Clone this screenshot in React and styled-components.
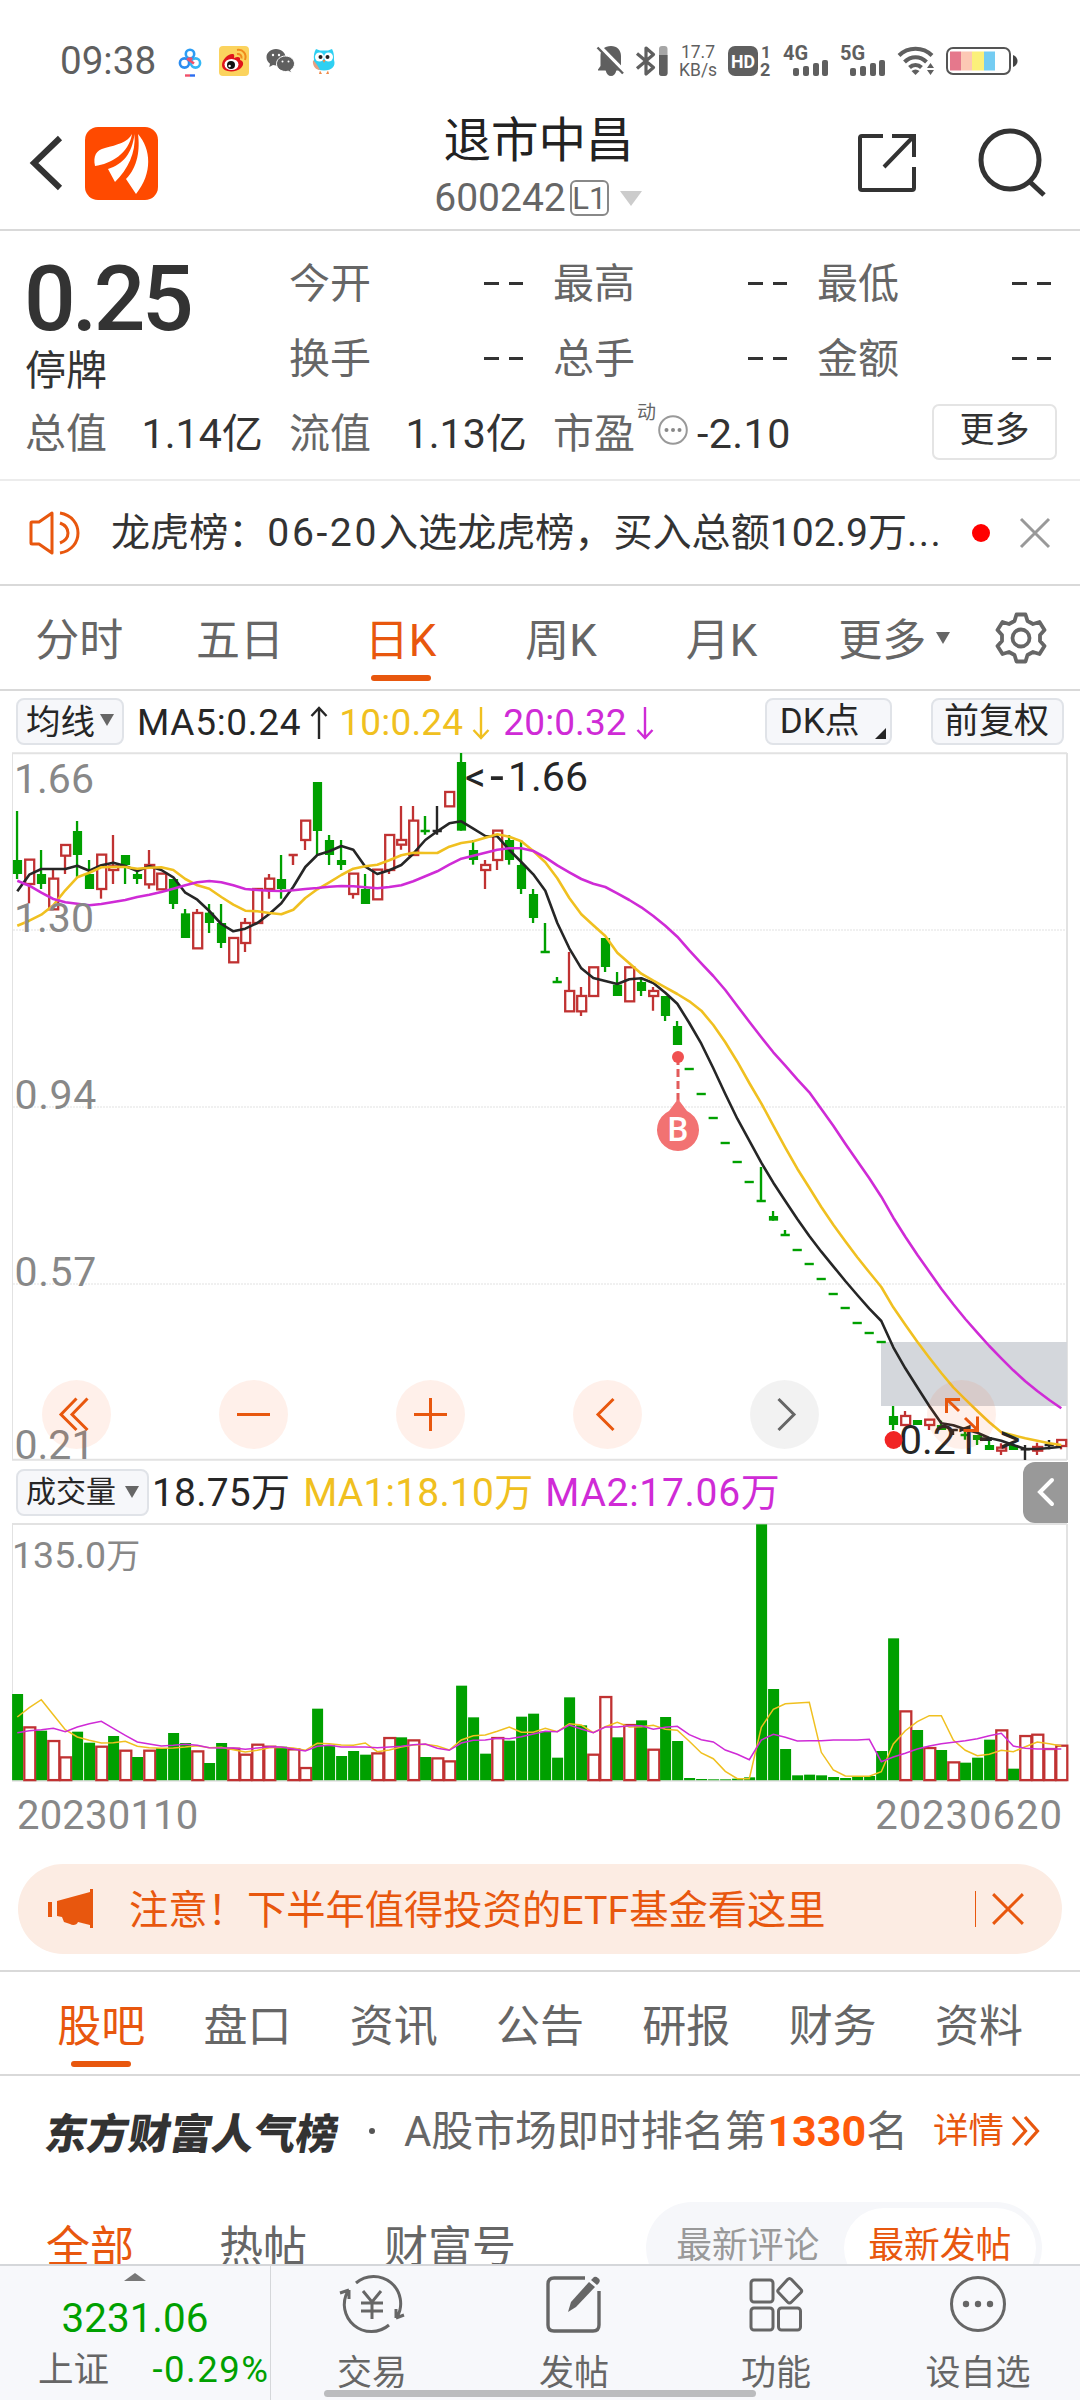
import React from "react";
import styled, { createGlobalStyle, css } from "styled-components";

const ORANGE = "#e8570e";
const GREEN = "#00a000";
const RED = "#c03232";
const YELLOW = "#f0c020";
const MAGENTA = "#cf2bd6";
const INK = "#262626";
const FONT = `Roboto, "Noto Sans CJK SC", sans-serif`;

const Global = createGlobalStyle`
  html, body { margin: 0; padding: 0; background: #fff; }
  * { box-sizing: border-box; }
  svg { display: block; flex: none; overflow: visible; }
`;

const Screen = styled.div`
  width: 1080px;
  height: 2400px;
  display: flex;
  flex-direction: column;
  overflow: hidden;
  background: #fff;
  color: #333;
  font-family: ${FONT};
  font-weight: 400;
  white-space: nowrap;
`;

/* ---------- status bar ---------- */
const StatusBar = styled.div`
  height: 114px;
  padding: 8px 61px 0 60px;
  display: flex;
  align-items: center;
  justify-content: space-between;
  color: #5f5f5f;
`;
const StatusGroup = styled.div`
  display: flex;
  align-items: center;
  gap: ${(p) => p.$gap}px;
`;
const Clock = styled.span`
  font-size: 38.6px;
  line-height: 44px;
  margin-right: 5px;
`;
const NetSpeed = styled.span`
  width: 38px;
  font-size: 17.5px;
  line-height: 18px;
  text-align: center;
  display: flex;
  flex-direction: column;
`;

/* ---------- header ---------- */
const Header = styled.div`
  height: 117px;
  padding: 0 33px 0 28px;
  border-bottom: 2px solid #d9d9d9;
  display: grid;
  grid-template-columns: 300px 1fr 300px;
`;
const HeaderSide = styled.div`
  display: flex;
  align-items: center;
  gap: ${(p) => p.$gap}px;
  justify-content: ${(p) => (p.$end ? "flex-end" : "flex-start")};
  padding-bottom: 17px;
`;
const HeaderMid = styled.div`
  display: flex;
  flex-direction: column;
  align-items: center;
  gap: 9px;
  padding-top: 1px;
`;
const Title = styled.div`
  font-size: 47.5px;
  line-height: 52px;
  padding-left: 2px;
  color: #222;
`;
const CodeRow = styled.div`
  display: flex;
  align-items: center;
  height: 44px;
  font-size: 39px;
  line-height: 44px;
  color: #666;
  padding-left: 1px;
`;
const LevelTag = styled.span`
  width: 39px;
  height: 36px;
  margin: 0 11px 0 4px;
  border: 2px solid #888;
  border-radius: 6px;
  font-size: 31px;
  line-height: 33px;
  text-align: center;
`;
const Triangle = styled.span`
  width: 0;
  height: 0;
  flex: none;
  border-left: ${(p) => p.$w / 2}px solid transparent;
  border-right: ${(p) => p.$w / 2}px solid transparent;
  ${(p) =>
    p.$up
      ? css`border-bottom: ${p.$h}px solid ${p.$color};`
      : css`border-top: ${p.$h}px solid ${p.$color};`}
  margin-right: ${(p) => p.$mr || 0}px;
  margin-bottom: ${(p) => p.$mb || 0}px;
`;

/* ---------- quote ---------- */
const Quote = styled.div`
  height: 250px;
  padding: 15px 0 0 25px;
  border-bottom: 2px solid #ececec;
  display: grid;
  grid-template-columns: repeat(4, 264px);
  grid-template-rows: repeat(3, 75px);
`;
const PriceCell = styled.div`
  grid-row: span 2;
  display: flex;
  flex-direction: column;
  padding-top: 15px;
`;
const Price = styled.div`
  font-size: 91px;
  line-height: 76px;
  font-weight: 500;
  letter-spacing: -3.6px;
  margin-left: -1px;
  color: #333;
`;
const Halt = styled.div`
  margin-top: 10px;
  font-size: 41px;
  line-height: 48px;
  color: #333;
`;
const Cell = styled.div`
  width: 238px;
  display: flex;
  align-items: center;
  justify-content: ${(p) => (p.$pack ? "flex-start" : "space-between")};
  font-size: 41px;
  line-height: 48px;
  color: #666;
`;
const Value = styled.span`
  color: #333;
  font-size: 41.2px;
  letter-spacing: ${(p) => p.$ls || 0}px;
  margin-left: ${(p) => p.$ml || 0}px;
`;
const Dashes = styled.span`
  display: flex;
  gap: 10px;
  margin-right: 4px;
  &::before, &::after {
    content: "";
    width: 14.5px;
    height: 3.5px;
    background: #333;
  }
`;
const PeNote = styled.sup`
  font-size: 19px;
  line-height: 20px;
  align-self: flex-start;
  margin: 7px 1px 0 2px;
`;
const MoreButton = styled.button`
  align-self: center;
  justify-self: end;
  width: 125px;
  height: 56px;
  margin: 0 24px 3px 0;
  padding: 0 0 3px;
  border: 2px solid #e4e4e4;
  border-radius: 7px;
  background: #fff;
  font: 400 35px/44px ${FONT};
  color: #333;
`;

/* ---------- news ---------- */
const News = styled.div`
  height: 105px;
  padding: 0 29px;
  border-bottom: 2px solid #d9d9d9;
  display: flex;
  align-items: center;
`;
const NewsText = styled.div`
  margin-left: 30px;
  width: 862px;
  font-size: 39.1px;
  line-height: 48px;
`;
const Spaced = styled.span`
  letter-spacing: ${(p) => p.$ls}px;
`;
const Dot = styled.span`
  width: 18px;
  height: 18px;
  border-radius: 50%;
  background: #f00;
  margin-right: 29px;
`;

/* ---------- tabs ---------- */
const Tabs = styled.div`
  height: ${(p) => p.$h}px;
  padding-left: ${(p) => p.$pl || 0}px;
  border-top: ${(p) => (p.$ruled ? "2px solid #d9d9d9" : "none")};
  border-bottom: 2px solid #d9d9d9;
  display: flex;
`;
const Tab = styled.div`
  width: ${(p) => p.$w}px;
  display: flex;
  flex-direction: column;
  align-items: center;
  font-size: 44px;
  line-height: 52px;
  padding-top: ${(p) => p.$top}px;
  color: ${(p) => (p.$on ? ORANGE : "#666")};
`;
const TabLabel = styled.span`
  display: flex;
  align-items: center;
  gap: 10px;
  margin-left: ${(p) => p.$ml || 0}px;
`;
const Underline = styled.i`
  width: 60px;
  height: 6px;
  border-radius: 3px;
  margin-top: ${(p) => p.$mt}px;
  background: ${ORANGE};
`;
const GearSlot = styled.div`
  flex: 1;
  display: flex;
  align-items: center;
  justify-content: center;
  padding: 0 1px 0 0;
`;

/* ---------- indicator rows ---------- */
const IndicatorRow = styled.div`
  height: ${(p) => p.$h}px;
  padding: ${(p) => p.$pad};
  display: flex;
  align-items: center;
  font-size: ${(p) => p.$fs}px;
  line-height: 46px;
`;
const Chip = styled.button`
  width: ${(p) => p.$w}px;
  height: 47px;
  padding: 0 ${(p) => p.$px}px;
  display: flex;
  align-items: center;
  justify-content: space-between;
  border: 2px solid #e0e3e8;
  border-radius: 8px;
  background: #f6f7fa;
  color: #262626;
  font: 400 ${(p) => p.$fs}px/42px ${FONT};
  margin-right: ${(p) => p.$mr || 0}px;
`;
const Corner = styled.i`
  width: 0;
  height: 0;
  margin-top: 23px;
  border-left: 11px solid transparent;
  border-bottom: 11px solid #262626;
`;
const MaValue = styled.span`
  display: flex;
  align-items: center;
  gap: 9px;
  padding-top: 2px;
  color: ${(p) => p.$color};
  letter-spacing: ${(p) => p.$ls || 0}px;
  margin-right: ${(p) => p.$mr}px;
`;
const Spacer = styled.div`
  flex: 1;
`;
const SideHandle = styled.div`
  width: 45px;
  height: 61px;
  border-radius: 12px 0 0 12px;
  background: #999;
  display: flex;
  align-items: center;
  justify-content: center;
`;

/* ---------- charts ---------- */
const ChartBox = styled.div`
  position: relative;
  height: ${(p) => p.$h}px;
`;
const ChartButtons = styled.div`
  position: absolute;
  left: 42px;
  bottom: 12px;
  display: flex;
  gap: 108px;
`;
const RoundButton = styled.div`
  width: 69px;
  height: 69px;
  border-radius: 50%;
  background: ${(p) => (p.$mute ? "rgba(0,0,0,.05)" : "rgba(255,90,20,.09)")};
`;
const DateRow = styled.div`
  height: 68px;
  padding: 0 17px 1px 17px;
  display: flex;
  align-items: center;
  justify-content: space-between;
  font-size: 40px;
  color: #888;
`;

/* ---------- banner ---------- */
const Banner = styled.div`
  height: 90px;
  margin: 14px 18px 16px;
  padding: 0 37px 0 30px;
  border-radius: 45px;
  background: #fcece3;
  display: flex;
  align-items: center;
  color: ${ORANGE};
`;
const BannerText = styled.div`
  flex: 1;
  margin: 3px 0 0 35px;
  font-size: 39.3px;
  line-height: 48px;
`;
const BannerRule = styled.i`
  width: 1.5px;
  height: 36px;
  margin-right: 15px;
  background: ${ORANGE};
`;

/* ---------- feed ---------- */
const Feed = styled.div`
  flex: 1;
  overflow: hidden;
`;
const RankRow = styled.div`
  height: 110px;
  padding: 0 40px 0 46px;
  display: flex;
  align-items: center;
  font-size: 41.9px;
  line-height: 50px;
  color: #666;
`;
const RankTitle = styled.div`
  width: 296px;
  font-family: "Noto Sans CJK SC", sans-serif;
  font-weight: 900;
  font-size: 41.8px;
  color: #333;
  transform: skewX(-9deg);
`;
const RankDot = styled.i`
  width: 6px;
  height: 6px;
  margin: 0 29px 0 27px;
  border-radius: 50%;
  background: #555;
`;
const RankNo = styled.b`
  color: #ff5a0a;
  font-weight: 700;
  font-size: 43px;
  margin-left: 1px;
`;
const Detail = styled.span`
  display: flex;
  align-items: center;
  gap: 7px;
  margin-left: auto;
  font-size: 35.5px;
  color: ${ORANGE};
`;
const FilterRow = styled.div`
  display: flex;
  align-items: flex-start;
  padding: 16px 38px 0 46px;
`;
const Filter = styled.div`
  font-size: 44px;
  line-height: 52px;
  margin: 20px ${(p) => p.$mr}px 0 0;
  color: ${(p) => (p.$on ? ORANGE : "#666")};
`;
const Toggle = styled.div`
  width: 396px;
  height: 92px;
  margin-left: auto;
  padding: 6px;
  border-radius: 46px;
  background: #f6f7fa;
  display: flex;
`;
const ToggleItem = styled.div`
  width: ${(p) => p.$w}px;
  height: 80px;
  border-radius: 40px;
  text-align: center;
  font-size: 35.8px;
  line-height: 77px;
  background: ${(p) => (p.$on ? "#fff" : "transparent")};
  color: ${(p) => (p.$on ? ORANGE : "#999")};
`;

/* ---------- bottom bar ---------- */
const BottomBar = styled.div`
  position: relative;
  height: 136px;
  border-top: 2px solid #d5d7da;
  background: #f7f8fb;
  display: flex;
`;
const IndexCell = styled.div`
  width: 271px;
  border-right: 1px solid #d5d7da;
  padding-top: 7px;
  display: flex;
  flex-direction: column;
  align-items: center;
`;
const IndexValue = styled.div`
  margin-top: 15px;
  font-size: 40.4px;
  line-height: 46px;
  color: ${GREEN};
`;
const IndexLine = styled.div`
  align-self: stretch;
  display: flex;
  justify-content: space-between;
  margin-top: 7px;
  padding: 0 2px 0 38px;
  font-size: 35.5px;
  line-height: 42px;
  color: #666;
`;
const Change = styled.span`
  font-size: 36.5px;
  letter-spacing: 1.5px;
  margin-right: -1.5px;
  color: ${GREEN};
`;
const NavItem = styled.div`
  width: 202px;
  padding-top: 9px;
  display: flex;
  flex-direction: column;
  align-items: center;
  gap: 19px;
  font-size: 35px;
  line-height: 44px;
  color: #666;
`;
const HomeIndicator = styled.div`
  position: absolute;
  left: 324px;
  bottom: 3px;
  width: 432px;
  height: 7px;
  border-radius: 4px;
  background: #bbbcbe;
`;

/* ---------- chart data: [kind, high, bodyTop, bodyBottom, low], thirds of a pixel ---------- */
const CANDLES = [
  ["g", 213, 360, 402, 417], ["r", 358, 358, 432, 490], ["g", 330, 402, 432, 447], ["r", 388, 415, 508, 508],
  ["r", 314, 314, 347, 402], ["g", 243, 273, 345, 413], ["g", 360, 402, 447, 447], ["r", 343, 343, 447, 476],
  ["r", 285, 378, 390, 432], ["g", 345, 345, 375, 432], ["g", 390, 402, 417, 432], ["r", 330, 374, 433, 446],
  ["r", 400, 400, 448, 448], ["g", 417, 417, 492, 507], ["g", 507, 520, 594, 594], ["r", 507, 518, 625, 625],
  ["g", 492, 518, 549, 579], ["g", 492, 549, 609, 624], ["r", 593, 593, 667, 667], ["r", 534, 548, 609, 636],
  ["r", 446, 446, 549, 549], ["r", 402, 415, 447, 476], ["g", 345, 417, 447, 476], ["rc", 345, 345, 345, 375],
  ["r", 241, 241, 300, 330], ["g", 126, 126, 273, 345], ["g", 285, 300, 345, 375], ["g", 300, 360, 375, 390],
  ["r", 400, 400, 462, 476], ["g", 402, 447, 492, 492], ["r", 388, 388, 478, 478], ["r", 284, 284, 390, 402],
  ["r", 198, 299, 314, 329], ["r", 198, 241, 345, 345], ["gc", 228, 273, 273, 284], ["kc", 198, 273, 273, 284],
  ["r", 155, 155, 199, 199], ["g", 39, 66, 272, 272], ["g", 300, 330, 360, 374], ["r", 360, 374, 390, 447],
  ["r", 271, 271, 360, 390], ["g", 285, 300, 360, 374], ["g", 300, 375, 447, 462], ["g", 447, 462, 534, 549],
  ["gc", 549, 636, 636, 636], ["gc", 711, 726, 726, 726], ["r", 636, 752, 814, 814], ["r", 741, 767, 814, 828],
  ["r", 681, 681, 768, 768], ["g", 594, 594, 681, 696], ["g", 696, 734, 768, 768], ["r", 681, 681, 784, 784],
  ["g", 711, 726, 753, 768], ["r", 741, 752, 768, 812], ["g", 768, 768, 828, 843], ["g", 843, 858, 915, 915],
  ["gc", 987, 987, 987, 987], ["gc", 1062, 1062, 1062, 1062], ["gc", 1134, 1134, 1134, 1134], ["gc", 1209, 1209, 1209, 1209],
  ["gc", 1266, 1266, 1266, 1266], ["gc", 1326, 1326, 1326, 1326], ["gc", 1281, 1383, 1383, 1383], ["g", 1413, 1428, 1442, 1442],
  ["gc", 1470, 1485, 1485, 1485], ["gc", 1530, 1530, 1530, 1530], ["gc", 1572, 1572, 1572, 1572], ["gc", 1617, 1617, 1617, 1617],
  ["gc", 1662, 1662, 1662, 1662], ["gc", 1704, 1704, 1704, 1704], ["gc", 1749, 1749, 1749, 1749], ["gc", 1779, 1779, 1779, 1779],
  ["gc", 1806, 1806, 1806, 1806], ["g", 1998, 2028, 2055, 2070], ["r", 2013, 2027, 2055, 2055], ["g", 2040, 2040, 2055, 2055],
  ["r", 2038, 2038, 2055, 2070], ["g", 2042, 2055, 2070, 2070], ["kc", 2068, 2070, 2070, 2085], ["gc", 2070, 2085, 2085, 2099],
  ["g", 2085, 2085, 2100, 2115], ["g", 2100, 2115, 2130, 2130], ["r", 2110, 2122, 2132, 2145], ["g", 2115, 2115, 2130, 2130],
  ["kc", 2115, 2128, 2128, 2160], ["r", 2108, 2120, 2132, 2145], ["kc", 2100, 2115, 2115, 2128], ["r", 2099, 2099, 2118, 2128],
];
const MA5 = [454, 404, 387, 387, 387, 377, 392, 376, 368, 378, 393, 379, 390, 412, 458, 479, 513, 552, 574, 566, 549, 522, 490, 440, 381, 345, 334, 318, 329, 380, 402, 391, 375, 341, 300, 274, 250, 244, 266, 288, 289, 330, 366, 403, 452, 549, 625, 685, 714, 723, 732, 718, 715, 729, 758, 791, 849, 911, 985, 1062, 1136, 1202, 1268, 1328, 1383, 1437, 1488, 1535, 1579, 1623, 1665, 1706, 1743, 1822, 1885, 1942, 1998, 2050, 2056, 2068, 2078, 2094, 2102, 2115, 2127, 2127, 2124, 2120];
const MA10 = [557, 542, 524, 496, 451, 412, 398, 382, 381, 381, 386, 383, 382, 390, 417, 436, 446, 471, 494, 512, 514, 519, 523, 509, 474, 448, 427, 405, 386, 379, 374, 361, 346, 338, 339, 339, 320, 309, 304, 293, 283, 290, 304, 333, 367, 415, 474, 523, 556, 588, 638, 670, 701, 722, 742, 762, 784, 812, 855, 907, 965, 1029, 1090, 1157, 1223, 1286, 1343, 1401, 1454, 1504, 1552, 1597, 1641, 1702, 1754, 1805, 1853, 1899, 1942, 1978, 2013, 2047, 2077, 2086, 2095, 2102, 2110, 2115];
const MA20 = [422, 437, 458, 477, 487, 491, 496, 492, 486, 480, 471, 464, 456, 446, 436, 427, 423, 427, 436, 447, 450, 452, 453, 451, 447, 444, 440, 438, 439, 442, 445, 441, 436, 424, 409, 394, 374, 356, 347, 338, 329, 325, 325, 333, 352, 376, 397, 417, 431, 441, 460, 480, 502, 528, 557, 590, 631, 670, 708, 750, 798, 845, 892, 937, 977, 1018, 1057, 1107, 1157, 1211, 1263, 1315, 1370, 1433, 1490, 1544, 1595, 1646, 1693, 1737, 1778, 1818, 1855, 1891, 1924, 1953, 1980, 2005];
const VOLUMES = [702, 800, 812, 841, 890, 815, 848, 858, 828, 870, 891, 870, 864, 819, 849, 872, 909, 849, 864, 882, 852, 858, 860, 866, 922, 746, 856, 888, 873, 884, 878, 832, 832, 839, 891, 893, 902, 677, 772, 881, 832, 842, 770, 761, 815, 893, 712, 796, 882, 709, 832, 793, 781, 867, 771, 843, 954, 957, 958, 958, 956, 952, 193, 687, 867, 946, 944, 946, 951, 954, 950, 948, 873, 535, 752, 810, 862, 870, 905, 908, 893, 839, 809, 926, 826, 822, 865, 855];
const RISING = new Set([1, 3, 4, 7, 9, 11, 15, 18, 19, 20, 21, 23, 24, 30, 31, 33, 35, 36, 40, 48, 49, 51, 53, 74, 76, 78, 82, 84, 85, 86, 87]);
const VMA1 = [771, 743, 719, 764, 809, 831, 841, 849, 848, 844, 859, 863, 865, 864, 861, 857, 863, 862, 869, 876, 871, 863, 862, 864, 871, 850, 851, 855, 856, 849, 875, 870, 861, 855, 853, 858, 870, 840, 827, 825, 814, 801, 817, 817, 805, 815, 791, 795, 818, 800, 787, 801, 800, 796, 808, 811, 844, 879, 896, 934, 956, 956, 802, 748, 731, 729, 727, 877, 930, 948, 949, 949, 935, 852, 812, 785, 767, 767, 840, 871, 887, 883, 871, 875, 860, 846, 851, 858];
const VMA2 = [818, 812, 809, 805, 815, 801, 791, 784, 805, 826, 846, 852, 858, 856, 853, 856, 863, 864, 864, 868, 864, 860, 861, 867, 873, 859, 856, 861, 861, 861, 863, 861, 859, 854, 852, 865, 871, 849, 841, 840, 835, 836, 830, 822, 814, 815, 795, 807, 818, 801, 801, 797, 797, 808, 802, 799, 824, 839, 846, 870, 883, 899, 840, 823, 832, 843, 842, 842, 840, 840, 840, 838, 905, 891, 880, 867, 858, 851, 847, 842, 836, 827, 820, 858, 865, 867, 867, 867];

const cx = (i) => 17.3 + i * 12;
const toPoints = (ys, base) => ys.map((v, i) => `${cx(i).toFixed(1)},${(base + v / 3).toFixed(1)}`).join(" ");

function Candle({ i, d }) {
  const [kind, hi, top, bottom, lo] = d;
  const x = cx(i);
  const y = (v) => 740 + v / 3;
  const color = kind[0] === "g" ? GREEN : kind[0] === "r" ? RED : INK;
  if (kind[1] === "c") {
    return <path d={`M${x - 4.7} ${y(top)}h9.2M${x - 0.3} ${y(hi)}V${y(lo)}`} stroke={color} strokeWidth="2.4" fill="none" />;
  }
  if (kind === "g") {
    return (
      <g fill={color}>
        <rect x={x - 1.4} y={y(hi)} width="2.3" height={y(lo) - y(hi)} />
        <rect x={x - 4.4} y={y(top)} width="9.2" height={y(bottom) - y(top)} />
      </g>
    );
  }
  return (
    <g stroke={color} strokeWidth="2.3" fill="none">
      <path d={`M${x - 0.3} ${y(hi)}V${y(top)}M${x - 0.3} ${y(bottom)}V${y(lo)}`} />
      <rect x={x - 4.1} y={y(top) + 0.3} width="9" height={Math.max(y(bottom) - y(top) - 0.3, 2)} />
    </g>
  );
}

function KLineChart() {
  return (
    <svg width="1080" height="709" viewBox="0 752 1080 709" fontFamily="Roboto, sans-serif" fontSize="41">
      <g stroke="#e2e2e2" fill="none">
        <path d="M12.5 753V1460" />
        <path d="M12 753.2H1067M1067 753V1460M12 1459.8H1067" strokeWidth="2" />
      </g>
      <path d="M13 930H1066M13 1107H1066M13 1284H1066" stroke="#ececec" strokeWidth="1.6" strokeDasharray="2 1" />
      <rect x="881" y="1342" width="186" height="64" fill="#d4d7dc" />
      {CANDLES.map((d, i) => <Candle key={i} i={i} d={d} />)}
      <g fill="none" strokeWidth="2.6" strokeLinejoin="round">
        <polyline points={toPoints(MA5, 740)} stroke={INK} />
        <polyline points={toPoints(MA10, 740)} stroke={YELLOW} />
        <polyline points={toPoints(MA20, 740)} stroke={MAGENTA} />
      </g>
      <g fill="#888">
        <text x="14" y="793">1.66</text>
        <text x="14" y="932">1.30</text>
        <text x="14.5" y="1109" letterSpacing=".6">0.94</text>
        <text x="14.5" y="1286" letterSpacing=".6">0.57</text>
        <text x="14.5" y="1458.5">0.21</text>
      </g>
      <g fill={INK}>
        <text x="465" y="791">&lt;</text>
        <text x="490" y="793" fontSize="50">-</text>
        <text x="508" y="791">1.66</text>
        <text x="899" y="1453.5">0.21</text>
        <text x="979" y="1454" fontSize="50">-</text>
        <text x="999" y="1453">&gt;</text>
      </g>
      <path d="M678 1062V1102" stroke="#e25b5b" strokeWidth="3" strokeDasharray="8 4" strokeDashoffset="-7" />
      <circle cx="678" cy="1057" r="6" fill="#f05050" />
      <path d="M678 1099L687 1111A21 21 0 1 1 669 1111Z" fill="#f27272" />
      <text x="678" y="1140.5" fontSize="33" fontWeight="500" textAnchor="middle" fill="#fff">B</text>
      <circle cx="893.6" cy="1440" r="9" fill="#f12424" />
    </svg>
  );
}

function VolumeChart() {
  return (
    <svg width="1080" height="259" viewBox="0 1523 1080 259" fontFamily={FONT}>
      <g stroke="#e2e2e2" fill="none">
        <path d="M12.5 1524V1781" />
        <path d="M12 1524H1067M1067 1524V1781M12 1780.8H1067" strokeWidth="2" />
      </g>
      {VOLUMES.map((v, i) => {
        const y = 1460 + v / 3;
        return RISING.has(i) ? (
          <rect key={i} x={cx(i) - 5} y={y + 0.7} width="11" height={1779.4 - y} fill="#fff" stroke={RED} strokeWidth="2.3" />
        ) : (
          <rect key={i} x={cx(i) - 5.2} y={y} width="11" height={1780.2 - y} fill={GREEN} />
        );
      })}
      <g fill="none" strokeWidth="1.5">
        <polyline points={toPoints(VMA1, 1460)} stroke={YELLOW} />
        <polyline points={toPoints(VMA2, 1460)} stroke={MAGENTA} />
      </g>
      <text x="12" y="1568" fill="#888" fontSize="37.5">135.0<tspan fontSize="34">万</tspan></text>
    </svg>
  );
}

/* ---------- icons ---------- */
const CloudIcon = () => (
  <svg width="24" height="36" viewBox="0 0 24 36" fill="none" strokeWidth="2.6">
    <circle cx="6.5" cy="20" r="4.6" stroke="#2b8cf0" />
    <circle cx="17.5" cy="20" r="4.6" stroke="#35b8f5" />
    <circle cx="12" cy="11" r="4.2" stroke="#2b9df5" />
    <path d="M9 15.5L16 20.5M10 15Q12 17 14 15" stroke="#f0506a" />
    <path d="M7 32.5H12" stroke="#f0506a" strokeWidth="2.4" />
    <path d="M12 32.5H17" stroke="#2b6cf0" strokeWidth="2.4" />
  </svg>
);
const WeiboIcon = () => (
  <svg width="30" height="30" viewBox="0 0 30 30">
    <rect width="30" height="30" rx="4" fill="#fbd35e" />
    <path d="M3 19C3 13 10 7 14 8C16 8.500 15 11 15 12C19 10 22 11 21 14C25 15 25 19 22 22C17 27 3 27 3 19Z" fill="#e0141c" />
    <ellipse cx="12.5" cy="18.5" rx="7" ry="5.5" fill="#fff" />
    <circle cx="12" cy="19" r="4" fill="#111" />
    <circle cx="10.6" cy="20" r="1.2" fill="#fff" />
    <path d="M18 8C21 7.500 23 9.500 22.500 12.500M18 4C24 3 28 8 26 14" fill="none" stroke="#f08a1c" strokeWidth="2" />
  </svg>
);
const WechatIcon = () => (
  <svg width="29" height="26" viewBox="0 0 29 26">
    <path d="M10 1C4.500 1 .5 4.700 .5 9.200C.5 12 2 14.200 4 15.700L3.300 19L7 17C8 17.300 9 17.400 10 17.400C15.500 17.400 19.500 13.700 19.500 9.200C19.500 4.700 15.500 1 10 1Z" fill="#5f5f5f" />
    <path d="M19.500 8C14.500 8 10.500 11.500 10.500 15.800C10.500 20 14.500 23.500 19.500 23.500C20.500 23.500 21.300 23.400 22.200 23.100L25.400 25L24.700 22C27 20.500 28.500 18.200 28.500 15.800C28.500 11.500 24.500 8 19.500 8Z" fill="#5f5f5f" stroke="#fff" strokeWidth="1" />
    <g fill="#fff"><circle cx="7" cy="7" r="1.2" /><circle cx="13" cy="7" r="1.2" /><circle cx="16.5" cy="13.5" r="1" /><circle cx="22.5" cy="13.5" r="1" /></g>
  </svg>
);
const OwlIcon = () => (
  <svg width="24" height="26" viewBox="0 0 24 26">
    <path d="M4 1L8 2.500H16L20 1C22 4 22 8 22 12C24 18 20 22.500 12 22.500C4 22.500 1 18 2 12C1.500 8 2 4 4 1Z" fill="#2fd0f2" />
    <path d="M1 12C0 18 4 22 8 22C6 18 4 15 1 12Z" fill="#e8a080" />
    <circle cx="7.5" cy="9" r="4.5" fill="#fff" /><circle cx="16.5" cy="9" r="4.5" fill="#fff" />
    <circle cx="8.5" cy="9" r="2" fill="#222" /><circle cx="15.5" cy="9" r="2" fill="#222" />
    <path d="M10.500 12H13.500L12 15ZM8 22.500L7 26H10ZM16 22.500L14 26H17Z" fill="#f08a4a" />
  </svg>
);
const BellOffIcon = () => (
  <svg width="27" height="30" viewBox="0 0 27 30">
    <path d="M14 0C7.500 0 3.500 4 3.500 10V20L1 23.500V24.500H25V23L24 21V10C24 4 20 0 14 0Z" fill="#5f5f5f" />
    <path d="M8.500 24H19.500Q18 30 14 30Q10 30 8.500 24Z" fill="#5f5f5f" />
    <path d="M2 .5L28 27" stroke="#fff" strokeWidth="5" />
    <path d="M.5 1.500L26 27.500" stroke="#5f5f5f" strokeWidth="2.4" />
  </svg>
);
const BluetoothIcon = () => (
  <svg width="33" height="30" viewBox="0 0 33 30" fill="none">
    <path d="M2 7.500L18.500 21.500L11 28V2L18.500 8.500L2 22.500" stroke="#5f5f5f" strokeWidth="3.2" strokeLinejoin="round" />
    <rect x="24" y="0" width="8.5" height="30" rx="3" fill="#a6a6a6" />
    <path d="M24 9H32.500V27A3 3 0 0 1 29.500 30H27A3 3 0 0 1 24 27Z" fill="#5f5f5f" />
  </svg>
);
const HdIcon = () => (
  <svg width="44" height="32" viewBox="0 0 44 32" fontFamily="Roboto, sans-serif" fontWeight="700">
    <rect x="0" y="1" width="30" height="30" rx="7" fill="#5f5f5f" />
    <text x="15" y="22.5" fontSize="19" textAnchor="middle" textLength="24" lengthAdjust="spacingAndGlyphs" fill="#fff">HD</text>
    <text x="33" y="13" fontSize="17" fill="#5f5f5f">1</text>
    <text x="32" y="31" fontSize="18" fill="#5f5f5f">2</text>
  </svg>
);
const SignalIcon = ({ label }) => (
  <svg width="46" height="32" viewBox="0 0 46 32" fontFamily="Roboto, sans-serif" fill="#5f5f5f">
    <text x="0" y="15" fontSize="20" fontWeight="700">{label}</text>
    <rect x="10" y="23" width="6" height="8" rx="2" />
    <rect x="20" y="21" width="6" height="10" rx="2" />
    <rect x="30" y="18" width="6" height="13" rx="2" />
    <rect x="39" y="15" width="6" height="16" rx="2" />
  </svg>
);
const WifiIcon = () => (
  <svg width="38" height="30" viewBox="0 0 38 30" fill="none" stroke="#5f5f5f" strokeWidth="4">
    <path d="M2 9.500C11 .5 26 .5 35 9.500M7.500 16C14 9.500 23 9.500 29.500 16M12.500 21.500C16 18 21 18 24.500 21.500" />
    <path d="M18.500 29L14.500 25C17 23 20 23 22.500 25Z" fill="#5f5f5f" stroke="none" />
    <path d="M33.500 17L37 22H30ZM33.500 29L37 24H30Z" fill="#5f5f5f" stroke="none" />
  </svg>
);
const BatteryIcon = () => (
  <svg width="73" height="28" viewBox="0 0 73 28">
    <rect x="1" y="1" width="63" height="26" rx="6" fill="#fff" stroke="#555" strokeWidth="2" />
    <rect x="4" y="4.5" width="11" height="19" fill="#e5788c" />
    <rect x="15" y="4.5" width="11" height="19" fill="#fcc8b4" />
    <rect x="26" y="4.5" width="12" height="19" fill="#fbf07a" />
    <rect x="38" y="4.5" width="11" height="19" fill="#74ccf2" />
    <path d="M67 8C73 10 73 18 67 20Z" fill="#444" />
  </svg>
);
const BackIcon = () => (
  <svg width="36" height="56" viewBox="0 0 36 56">
    <path d="M32 3L6 28L32 53" fill="none" stroke="#333" strokeWidth="6" />
  </svg>
);
const LogoIcon = () => (
  <svg width="73" height="73" viewBox="0 0 73 73">
    <rect width="73" height="73" rx="13" fill="#ff4a00" />
    <path d="M47 7C43 15 32 18 20 21C11 23 8 29 10 39C26 37 44 26 47 7Z" fill="#fff" />
    <path d="M49.500 7C47 27 38 37 23 42L30 55C43 42 51 26 49.500 7Z" fill="#fff" />
    <path d="M53 7C66 22 68 46 51 67L41 52C53 40 55 22 53 7Z" fill="#fff" />
  </svg>
);
const ShareIcon = () => (
  <svg width="60" height="60" viewBox="0 0 60 60" fill="none" stroke="#333" strokeWidth="4">
    <path d="M26 3H5Q3 3 3 5V55Q3 57 5 57H55Q57 57 57 55V34" />
    <path d="M35 3H57V24M57 3L27 34" />
  </svg>
);
const SearchIcon = () => (
  <svg width="70" height="70" viewBox="0 0 70 70" fill="none" stroke="#333" strokeWidth="5">
    <circle cx="33" cy="32" r="29" />
    <path d="M53 54L67 67" />
  </svg>
);
const MoreDots = () => (
  <svg width="32" height="40" viewBox="0 0 32 40">
    <circle cx="16" cy="16" r="13.8" fill="none" stroke="#999" strokeWidth="2" />
    <g fill="#888"><circle cx="9.5" cy="16" r="2" /><circle cx="16" cy="16" r="2" /><circle cx="22.5" cy="16" r="2" /></g>
  </svg>
);
const SpeakerIcon = () => (
  <svg width="52" height="46" viewBox="0 0 52 46" fill="none" stroke={ORANGE} strokeWidth="3">
    <path d="M3 12H10L23 3V43L10 34H3Q2 34 2 33V13Q2 12 3 12Z" strokeLinejoin="round" />
    <path d="M31 13C36 15 39 19 39 23S36 31 31 33" />
    <path d="M31 3C43 5 49 14 49 23S43 41 31 43" />
  </svg>
);
const CloseIcon = ({ size, color, width }) => (
  <svg width={size} height={size} viewBox="0 0 32 32">
    <path d="M2 2L30 30M30 2L2 30" stroke={color} strokeWidth={width} fill="none" />
  </svg>
);
const GearIcon = () => (
  <svg width="54" height="54" viewBox="0 0 54 54" fill="none" stroke="#666" strokeWidth="3.8">
    <path d="M22.500 3.500H31.500L33.500 10L39 13L45.500 11L50.500 19L46 24V30L50.500 35L45.500 43L39 41L33.500 44L31.500 50.500H22.500L20.500 44L15 41L8.500 43L3.500 35L8 30V24L3.500 19L8.500 11L15 13L20.500 10Z" strokeLinejoin="round" />
    <circle cx="27" cy="27" r="8.5" />
  </svg>
);
const Arrow = ({ up, color }) => (
  <svg width="18" height="34" viewBox="0 0 18 34" fill="none" stroke={color} strokeWidth="2.4">
    <path d={up ? "M9 33V2M1.500 10L9 2L16.500 10" : "M9 1V32M1.500 24L9 32L16.500 24"} />
  </svg>
);
const Glyph = ({ d, color = ORANGE }) => (
  <svg width="69" height="69" viewBox="0 0 69 69">
    <path d={d} fill="none" stroke={color} strokeWidth="3" />
  </svg>
);
const HandleIcon = () => (
  <svg width="20" height="32" viewBox="0 0 20 32">
    <path d="M16 4L4 16L16 28" fill="none" stroke="#fff" strokeWidth="4" strokeLinecap="round" />
  </svg>
);
const MegaphoneIcon = () => (
  <svg width="46" height="40" viewBox="0 0 46 40" fill={ORANGE}>
    <rect x="0" y="13" width="4" height="15" />
    <path d="M9 12L42 3V0H45V39H42V36L30 33C29 36 25 37 22 35L16 33L14 28L9 27Z" />
  </svg>
);
const DoubleRight = () => (
  <svg width="29" height="32" viewBox="0 0 29 32" fill="none" stroke={ORANGE} strokeWidth="3.2">
    <path d="M2 2L14.500 16L2 30M14 2L26.500 16L14 30" />
  </svg>
);
const TradeIcon = () => (
  <svg width="66" height="58" viewBox="0 0 66 58" fill="none" stroke="#666" strokeWidth="3">
    <path d="M17 8A27 27 0 0 1 58 42M57 43V34M57 43L65 40" />
    <path d="M50 50A27 27 0 0 1 9 16M10 15V24M10 15L1 18" />
    <path d="M24 16L33 27L42 16M33 27V44M22 28H44M22 36H44" />
  </svg>
);
const PostIcon = () => (
  <svg width="58" height="58" viewBox="0 0 58 58" fill="none" stroke="#666" strokeWidth="3.4">
    <path d="M40 3H9Q3 3 3 9V50Q3 56 9 56H48Q54 56 54 50V16" />
    <path d="M23 37L26 27L44 7L50 12L31 32Z" fill="#666" stroke="none" />
    <path d="M46 5L49 2Q51 1 53 3Q56 5 54 8L52 10Z" fill="#666" stroke="none" />
  </svg>
);
const GridIcon = () => (
  <svg width="54" height="58" viewBox="0 0 54 58" fill="none" stroke="#666" strokeWidth="3">
    <rect x="2" y="5" width="22" height="22" rx="3" />
    <rect x="2" y="33" width="22" height="22" rx="3" />
    <rect x="29.5" y="33" width="22" height="22" rx="3" />
    <path d="M38.500 4.500Q40.500 2.500 42.500 4.500L52 14.500Q53.500 16 52 17.500L42.500 27Q40.500 29 38.500 27L29.500 17.500Q28 16 29.500 14.500Z" />
  </svg>
);
const CircleMoreIcon = () => (
  <svg width="58" height="58" viewBox="0 0 58 58">
    <circle cx="29" cy="29" r="26.5" fill="none" stroke="#666" strokeWidth="3" />
    <g fill="#666"><circle cx="17" cy="29" r="3.2" /><circle cx="29" cy="29" r="3.2" /><circle cx="41" cy="29" r="3.2" /></g>
  </svg>
);

const CHART_TABS = ["分时", "五日", "日K", "周K", "月K"];
const INFO_TABS = ["股吧", "盘口", "资讯", "公告", "研报", "财务", "资料"];
const NAV = [["交易", TradeIcon], ["发帖", PostIcon], ["功能", GridIcon], ["设自选", CircleMoreIcon]];
const CONTROLS = [
  "M34.500 18.500L19 34.500L34.500 50M45.500 18.500L30 34.500L45.500 50",
  "M18 34.500H51",
  "M18 34.500H51M34.500 18V51",
  "M40.500 19L25 34.500L40.500 50",
  "M28.500 19L44 34.500L28.500 50",
  "M32 31L19.500 19M19.500 33V19.500H33M38 38L50.500 50M50.500 36.500V50.500H36.500",
];

export default function App() {
  return (
    <Screen>
      <Global />
      <StatusBar>
        <StatusGroup $gap={17}>
          <Clock>09:38</Clock>
          <CloudIcon />
          <WeiboIcon />
          <WechatIcon />
          <OwlIcon />
        </StatusGroup>
        <StatusGroup $gap={11}>
          <BellOffIcon />
          <BluetoothIcon />
          <NetSpeed><span>17.7</span><span>KB/s</span></NetSpeed>
          <HdIcon />
          <SignalIcon label="4G" />
          <SignalIcon label="5G" />
          <WifiIcon />
          <BatteryIcon />
        </StatusGroup>
      </StatusBar>

      <Header>
        <HeaderSide $gap={21}>
          <BackIcon />
          <LogoIcon />
        </HeaderSide>
        <HeaderMid>
          <Title>退市中昌</Title>
          <CodeRow>
            600242<LevelTag>L1</LevelTag>
            <Triangle $w={22} $h={15} $color="#ccc" />
          </CodeRow>
        </HeaderMid>
        <HeaderSide $end $gap={60}>
          <ShareIcon />
          <SearchIcon />
        </HeaderSide>
      </Header>

      <Quote>
        <PriceCell>
          <Price>0.25</Price>
          <Halt>停牌</Halt>
        </PriceCell>
        {["今开", "最高", "最低", "换手", "总手", "金额"].map((name) => (
          <Cell key={name}>{name}<Dashes /></Cell>
        ))}
        <Cell>总值<Value>1.14亿</Value></Cell>
        <Cell>流值<Value>1.13亿</Value></Cell>
        <Cell $pack>市盈<PeNote>动</PeNote><MoreDots /><Value $ml={8} $ls={0.4}>-2.10</Value></Cell>
        <MoreButton>更多</MoreButton>
      </Quote>

      <News>
        <SpeakerIcon />
        <NewsText>龙虎榜：<Spaced $ls={2.6}>06-20</Spaced>入选龙虎榜，买入总额102.9万<Spaced $ls={1.4}>...</Spaced></NewsText>
        <Dot />
        <CloseIcon size={32} color="#999" width={3} />
      </News>

      <Tabs $h={105}>
        {CHART_TABS.map((t) => (
          <Tab key={t} $w={160.6} $top={29} $on={t === "日K"}>
            <TabLabel $ml={-2}>{t}</TabLabel>
            {t === "日K" && <Underline $mt={8} />}
          </Tab>
        ))}
        <Tab $w={160.6} $top={29}>
          <TabLabel $ml={-3}>更多<Triangle $w={15} $h={12} $color="#666" $mr={-25} $mb={6} /></TabLabel>
        </Tab>
        <GearSlot><GearIcon /></GearSlot>
      </Tabs>

      <IndicatorRow $h={61} $pad="0 16px" $fs={37}>
        <Chip $w={108} $fs={34.5} $px={8} $mr={13}>均线<Triangle $w={15} $h={12} $color="#666" $mb={3} /></Chip>
        <MaValue $color={INK} $mr={11} $ls={0.7}>MA5:0.24<Arrow up color={INK} /></MaValue>
        <MaValue $color={YELLOW} $mr={13} $ls={0.2}>10:0.24<Arrow color={YELLOW} /></MaValue>
        <MaValue $color={MAGENTA} $mr={0} $ls={0.1}>20:0.32<Arrow color={MAGENTA} /></MaValue>
        <Spacer />
        <Chip $w={127} $fs={35} $px={4} $mr={39}><span>&nbsp;DK点</span><Corner /></Chip>
        <Chip $w={133} $fs={35} $px={11}>前复权</Chip>
      </IndicatorRow>

      <ChartBox $h={709}>
        <KLineChart />
        <ChartButtons>
          {CONTROLS.map((d, i) => (
            <RoundButton key={d} $mute={i === 4}><Glyph d={d} color={i === 4 ? "#666" : ORANGE} /></RoundButton>
          ))}
        </ChartButtons>
      </ChartBox>

      <IndicatorRow $h={62} $pad="0 12px 0 16px" $fs={39}>
        <Chip $w={133} $fs={30} $px={8} $mr={3}>成交量<Triangle $w={15} $h={12} $color="#666" /></Chip>
        <MaValue $color={INK} $mr={13} $ls={0.2}>18.75万</MaValue>
        <MaValue $color={YELLOW} $mr={12} $ls={0.2}>MA1:18.10万</MaValue>
        <MaValue $color={MAGENTA} $mr={0} $ls={0.7}>MA2:17.06万</MaValue>
        <Spacer />
        <SideHandle><HandleIcon /></SideHandle>
      </IndicatorRow>

      <ChartBox $h={259}>
        <VolumeChart />
      </ChartBox>
      <DateRow><Spaced $ls={0.2}>20230110</Spaced><Spaced $ls={1}>20230620</Spaced></DateRow>

      <Banner>
        <MegaphoneIcon />
        <BannerText>注意！下半年值得投资的ETF基金看这里</BannerText>
        <BannerRule />
        <CloseIcon size={34} color={ORANGE} width={2.8} />
      </Banner>

      <Tabs $h={106} $pl={28} $ruled>
        {INFO_TABS.map((t, i) => (
          <Tab key={t} $w={146.3} $top={29} $on={i === 0}>
            <TabLabel>{t}</TabLabel>
            {i === 0 && <Underline $mt={8} />}
          </Tab>
        ))}
      </Tabs>

      <Feed>
        <RankRow>
          <RankTitle>东方财富人气榜</RankTitle>
          <RankDot />
          <span>A股市场即时排名第<RankNo>1330</RankNo>名</span>
          <Detail>详情<DoubleRight /></Detail>
        </RankRow>
        <FilterRow>
          <Filter $on $mr={85}>全部</Filter>
          <Filter $mr={77}>热帖</Filter>
          <Filter $mr={0}>财富号</Filter>
          <Toggle>
            <ToggleItem $w={192}>最新评论</ToggleItem>
            <ToggleItem $w={193} $on>最新发帖</ToggleItem>
          </Toggle>
        </FilterRow>
      </Feed>

      <BottomBar>
        <IndexCell>
          <Triangle $up $w={22} $h={8} $color="#777" />
          <IndexValue>3231.06</IndexValue>
          <IndexLine>上证<Change>-0.29%</Change></IndexLine>
        </IndexCell>
        {NAV.map(([name, Icon]) => (
          <NavItem key={name}><Icon />{name}</NavItem>
        ))}
        <HomeIndicator />
      </BottomBar>
    </Screen>
  );
}
